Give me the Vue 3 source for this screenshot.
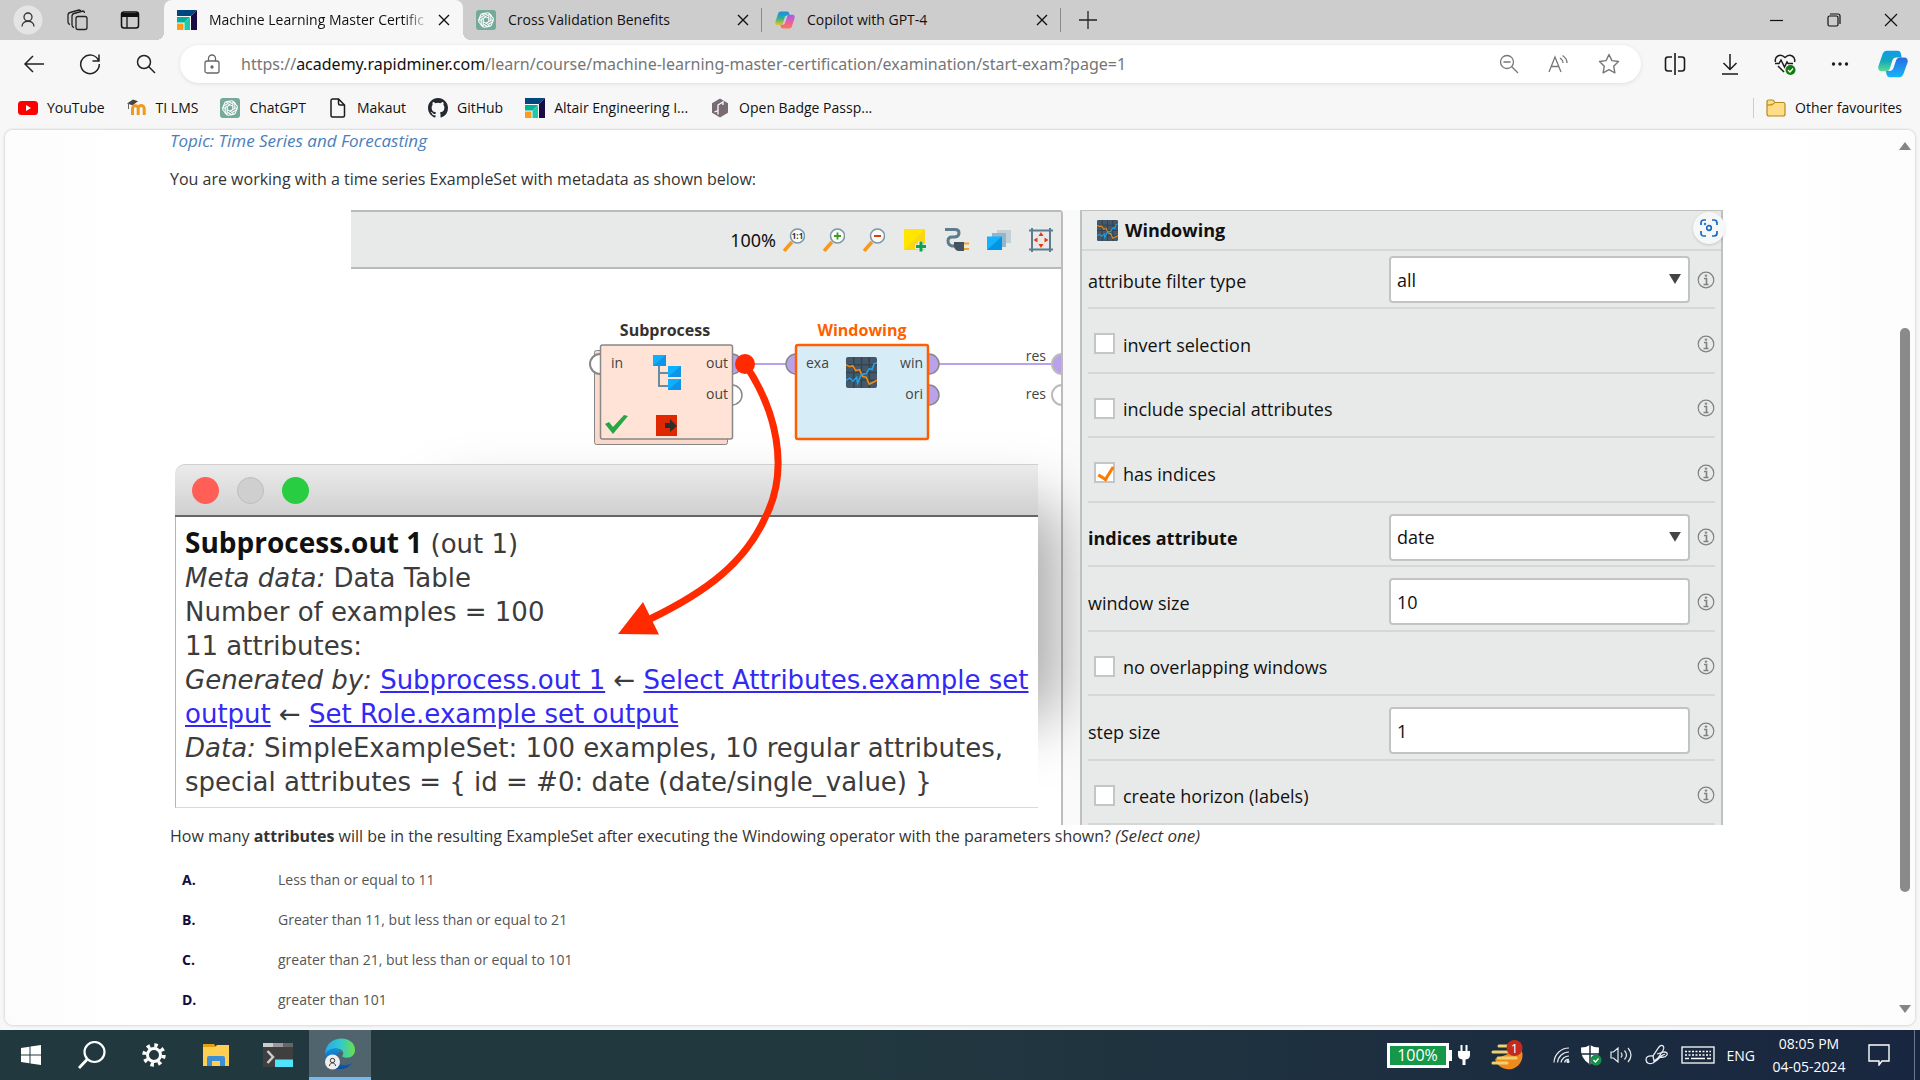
<script setup>
import { ref } from 'vue'

const tabs = [
  { title: 'Machine Learning Master Certific', icon: 'altair', active: true },
  { title: 'Cross Validation Benefits', icon: 'gpt' },
  { title: 'Copilot with GPT-4', icon: 'copilot' },
]
const favourites = [
  { name: 'YouTube', icon: 'youtube' },
  { name: 'TI LMS', icon: 'moodle' },
  { name: 'ChatGPT', icon: 'gpt' },
  { name: 'Makaut', icon: 'file' },
  { name: 'GitHub', icon: 'github' },
  { name: 'Altair Engineering I...', icon: 'altair' },
  { name: 'Open Badge Passp...', icon: 'badge' },
]
const params = ref([
  { id: 'filter', label: 'attribute filter type', type: 'select', value: 'all' },
  { id: 'invert', label: 'invert selection', type: 'check', value: false },
  { id: 'special', label: 'include special attributes', type: 'check', value: false },
  { id: 'has-indices', label: 'has indices', type: 'check', value: true },
  { id: 'indices', label: 'indices attribute', type: 'select', value: 'date', bold: true },
  { id: 'window', label: 'window size', type: 'text', value: '10' },
  { id: 'overlap', label: 'no overlapping windows', type: 'check', value: false },
  { id: 'step', label: 'step size', type: 'text', value: '1' },
  { id: 'horizon', label: 'create horizon (labels)', type: 'check', value: false },
])
const options = [
  ['A.', 'Less than or equal to 11'],
  ['B.', 'Greater than 11, but less than or equal to 21'],
  ['C.', 'greater than 21, but less than or equal to 101'],
  ['D.', 'greater than 101'],
]
</script>

<template>
  <div class="screen">
    <svg class="defs" aria-hidden="true">
      <defs>
        <linearGradient id="cp1" x1="0" y1="0" x2="0" y2="1">
          <stop offset="0" stop-color="#1b8be8" /><stop offset=".5" stop-color="#2fb28f" /><stop offset="1" stop-color="#f5c518" />
        </linearGradient>
        <linearGradient id="cp2" x1="0" y1="0" x2="0" y2="1">
          <stop offset="0" stop-color="#a45bf0" /><stop offset=".6" stop-color="#f0609a" /><stop offset="1" stop-color="#fb7a4b" />
        </linearGradient>
        <linearGradient id="cb1" x1="0" y1="0" x2="0" y2="1">
          <stop offset="0" stop-color="#0f9bea" /><stop offset=".5" stop-color="#14a9bd" /><stop offset="1" stop-color="#5fdc93" />
        </linearGradient>
        <linearGradient id="cb2" x1="0" y1="0" x2="0" y2="1">
          <stop offset="0" stop-color="#2b6be0" /><stop offset="1" stop-color="#16b5fb" />
        </linearGradient>
        <linearGradient id="edge1" x1="0" y1="0" x2="1" y2="0">
          <stop offset="0" stop-color="#2aa7e8" /><stop offset=".5" stop-color="#30c8d0" /><stop offset="1" stop-color="#6be04a" />
        </linearGradient>
        <linearGradient id="edge2" x1="0" y1="0" x2="0" y2="1">
          <stop offset="0" stop-color="#1291e0" /><stop offset="1" stop-color="#0c4aa0" />
        </linearGradient>
        <symbol id="altair" viewBox="0 0 20 20">
          <path d="M0 0h20L14 6H0z" fill="#00467f" /><path d="M20 0v20h-6V6z" fill="#1b0b45" />
          <path d="M0 7h13L7.500 12.500H0z" fill="#00b398" /><path d="M13 7v13H7.500v-7.500z" fill="#1fc9ac" />
          <path d="M0 13.500h6.500V20H0z" fill="#ff9a1a" />
        </symbol>
        <symbol id="gpt" viewBox="0 0 20 20">
          <rect width="20" height="20" rx="3" fill="#75a99a" />
          <g fill="none" stroke="#fff" stroke-width="1.100">
            <path id="petal" d="M10 3.200c2.500-1.200 5 .8 4.800 3.300v4L10 13.200M10 3.200C8.500 3 7 4 6.600 5.500" />
            <use href="#petal" transform="rotate(60 10 10)" /><use href="#petal" transform="rotate(120 10 10)" />
            <use href="#petal" transform="rotate(180 10 10)" /><use href="#petal" transform="rotate(240 10 10)" />
            <use href="#petal" transform="rotate(300 10 10)" />
          </g>
        </symbol>
        <symbol id="copilot" viewBox="0 0 20 20">
          <path d="M6 1.500h6c1.500 0 2 .8 2.400 2.500l.4 1.500h-2.500c-1.500 0-2.300.8-2.800 2.400L8 13c-.5 1.600-1.500 2.200-3 2.200H2.500C.6 15.200 0 13.500.5 11.500L3 4c.6-1.800 1.500-2.500 3-2.500z" fill="url(#cp1)" />
          <path d="M14 18.500H8c-1.500 0-2-.8-2.400-2.500l-.4-1.300h2.500c1.500 0 2.300-.9 2.800-2.600L12 7c.5-1.600 1.500-2.200 3-2.200h2.500c1.900 0 2.500 1.700 2 3.700L17 16c-.6 1.800-1.500 2.500-3 2.500z" fill="url(#cp2)" />
        </symbol>
        <symbol id="copilot-blue" viewBox="0 0 20 20">
          <path d="M6 .5h7c1.500 0 2 .8 2.400 2.500l.4 2.300h-3.500c-1.500 0-2.300.8-2.800 2.400L8 13c-.5 1.600-1.500 2.200-3 2.200H2.500C.6 15.200-.2 13.500.3 11.500L3 3c.6-1.800 1.500-2.500 3-2.500z" fill="url(#cb1)" />
          <path d="M14 19.500H8c-1.500 0-2-.8-2.400-2.500l-.4-2h2.500c1.500 0 2.300-.9 2.800-2.600L12 7.500c.5-1.600 1.500-2.200 3-2.200h2.500c1.900 0 2.700 1.700 2.200 3.700L17 17c-.6 1.800-1.500 2.500-3 2.500z" fill="url(#cb2)" />
        </symbol>
        <symbol id="youtube" viewBox="0 0 20 20">
          <rect y="3" width="20" height="14" rx="3.500" fill="#f00" /><path d="M8 7l5 3-5 3z" fill="#fff" />
        </symbol>
        <symbol id="moodle" viewBox="0 0 20 20">
          <path d="M4 17V10.500a2.800 2.800 0 0 1 5.700 0V17m0-6.500a2.900 2.900 0 0 1 6 0V17" transform="translate(1.500 0)" fill="none" stroke="#f09a1c" stroke-width="3" />
          <path d="M0 5.500L6 1.500l5 1.700-5.500 4z" fill="#444" /><path d="M1.500 5v6" stroke="#666" stroke-width="1" />
        </symbol>
        <symbol id="file" viewBox="0 0 20 20">
          <path d="M4 1h6.500L16.500 7v10.500q0 1.500-1.500 1.500H4.500Q3 19 3 17.500v-15Q3 1 4.500 1zM10.500 1v4.500q0 1.500 1.500 1.500h4.500" fill="none" stroke="#1b1b1b" stroke-width="1.500" />
        </symbol>
        <symbol id="github" viewBox="0 0 16 16">
          <path fill="#24292f" d="M8 0C3.580 0 0 3.580 0 8c0 3.540 2.290 6.530 5.470 7.590.4.070.55-.17.55-.38v-1.490C4 14.100 3.480 13.230 3.320 12.780c-.09-.23-.48-.94-.82-1.130-.28-.15-.68-.52-.01-.53.63-.01 1.080.58 1.230.82.72 1.210 1.870.87 2.330.66.07-.52.28-.87.51-1.070-1.780-.2-3.640-.89-3.640-3.950 0-.87.31-1.590.82-2.150-.08-.2-.36-1.020.08-2.120 0 0 .67-.21 2.200.82a7.400 7.400 0 0 1 4 0c1.530-1.040 2.200-.82 2.200-.82.44 1.100.16 1.920.08 2.120.51.56.82 1.270.82 2.150 0 3.070-1.870 3.750-3.650 3.950.29.25.54.73.54 1.480v2.200c0 .21.15.46.55.38A8 8 0 0 0 16 8c0-4.420-3.580-8-8-8z" />
        </symbol>
        <symbol id="badge" viewBox="0 0 20 20">
          <path d="M10 .5l8 4.700v9.600l-8 4.700-8-4.700V5.200z" fill="#7a6a74" /><path d="M4.500 14l3.500-1.500V7l5-3v3M8 12.500v4" fill="none" stroke="#fff" stroke-width="1.300" />
        </symbol>
        <symbol id="chart" viewBox="0 0 32 32">
          <rect width="32" height="32" rx="2" fill="#44586a" />
          <path d="M0 8h32M0 16h32M0 24h32M8 0v32M16 0v32M24 0v32" stroke="#34444f" stroke-width="1.500" />
          <path d="M0 8l4 2 3-1 3 5 4-1 3 7 4 1 3 7 4-2 4-2" fill="none" stroke="#f28c13" stroke-width="1.600" />
          <path d="M0 24l4-2 3 3 4-4 1 6 4-9 5-1 3-5 3 1 2-6 3-1" fill="none" stroke="#22a4ea" stroke-width="1.600" />
        </symbol>
      </defs>
    </svg>

    <header class="tabstrip">
      <div class="strip-tools">
        <button class="avatar" aria-label="Profile"><svg width="30" height="30" viewBox="0 0 30 30"><circle cx="15" cy="15" r="14.500" fill="#e4e4e4" /><g fill="none" stroke="#333" stroke-width="1.300"><circle cx="15" cy="12" r="4" /><path d="M9 21.500c0-7 12-7 12 0" /></g></svg></button>
        <button aria-label="Workspaces"><svg width="22" height="22" viewBox="0 0 22 22" fill="none" stroke="#222" stroke-width="1.300"><rect x="9" y="7.500" width="11" height="13" rx="2" /><path d="M7 18.500Q5 18 5 16V7q0-2 2-2.500l9-2.500q1.500 0 1.500 2M3 15.500Q1 15 1 13V6q0-2 2-2.500L12 1q1.500 0 1.500 1" /></svg></button>
        <button aria-label="Vertical tabs"><svg width="20" height="20" viewBox="0 0 20 20"><rect x="1.500" y="2" width="17" height="16" rx="2.500" fill="none" stroke="#111" stroke-width="1.500" /><path d="M1.500 3h17v4h-17z" fill="#111" /><path d="M7 7v11" stroke="#111" stroke-width="1.300" /></svg></button>
      </div>
      <nav class="tabs">
        <div v-for="t in tabs" :key="t.title" class="tab" :class="{ active: t.active }">
          <svg class="fav-icon"><use :href="'#' + t.icon" /></svg>
          <span class="tab-title">{{ t.title }}</span>
          <button class="tab-close" aria-label="Close tab"><svg width="12" height="12" viewBox="0 0 12 12"><path d="M1 1l10 10M11 1L1 11" stroke="#111" stroke-width="1.400" /></svg></button>
        </div>
        <button class="new-tab" aria-label="New tab"><svg width="18" height="18" viewBox="0 0 18 18"><path d="M9 0v18M0 9h18" stroke="#222" stroke-width="1.300" /></svg></button>
      </nav>
      <div class="window-controls">
        <button aria-label="Minimise"><svg width="14" height="14" viewBox="0 0 14 14"><path d="M0 7.500h13" stroke="#111" stroke-width="1.200" /></svg></button>
        <button aria-label="Restore"><svg width="14" height="14" viewBox="0 0 14 14" fill="none" stroke="#111" stroke-width="1.200"><rect x="1" y="3" width="10" height="10" rx="1.500" /><path d="M3 1h8q2 0 2 2v8" /></svg></button>
        <button aria-label="Close"><svg width="14" height="14" viewBox="0 0 14 14"><path d="M1 1l12 12M13 1L1 13" stroke="#111" stroke-width="1.200" /></svg></button>
      </div>
    </header>

    <div class="toolbar">
      <div class="nav-buttons">
        <button aria-label="Back"><svg width="22" height="22" viewBox="0 0 22 22" fill="none" stroke="#222" stroke-width="1.500"><path d="M21 11H2M10 3l-8 8 8 8" /></svg></button>
        <button aria-label="Refresh"><svg width="22" height="22" viewBox="0 0 22 22" fill="none" stroke="#222" stroke-width="1.500"><path d="M19.500 7.500A9.300 9.300 0 1 0 20.300 11M20 1.500V8h-6.500" /></svg></button>
        <button aria-label="Search"><svg width="20" height="20" viewBox="0 0 20 20" fill="none" stroke="#222" stroke-width="1.500"><circle cx="8" cy="8" r="6.500" /><path d="M12.800 12.800L19 19" /></svg></button>
      </div>
      <div class="address">
        <svg class="lock" width="16" height="20" viewBox="0 0 16 20" fill="none" stroke="#666" stroke-width="1.300"><rect x="1" y="7" width="14" height="12" rx="2" /><path d="M4.500 7V4.500a3.500 3.500 0 0 1 7 0V7" /><circle cx="8" cy="13" r="1" fill="#666" /></svg>
        <a class="url" href="#">https://<b>academy.rapidminer.com</b>/learn/course/machine-learning-master-certification/examination/start-exam?page=1</a>
        <button aria-label="Zoom out"><svg width="20" height="20" viewBox="0 0 20 20" fill="none" stroke="#777" stroke-width="1.300"><circle cx="8" cy="8" r="6.500" /><path d="M12.800 12.800L19 19M4.500 8h7" /></svg></button>
        <button aria-label="Read aloud"><svg width="22" height="20" viewBox="0 0 22 20" fill="none" stroke="#777" stroke-width="1.300"><path d="M1 18L7 3l6 15M3.200 12.500h7.500M12 4q3 2 3 5M14.500 1.500q4.500 2.800 4.500 7.500" /></svg></button>
        <button aria-label="Add to favourites"><svg width="22" height="22" viewBox="0 0 22 22" fill="none" stroke="#777" stroke-width="1.400" stroke-linejoin="round"><path d="M11 1.500l2.900 6.100 6.600.9-4.800 4.700 1.200 6.600L11 16.600l-5.900 3.200 1.200-6.600L1.500 8.500l6.600-.9z" /></svg></button>
      </div>
      <div class="actions">
        <button aria-label="Split screen"><svg width="22" height="22" viewBox="0 0 22 22" fill="none" stroke="#1b1b1b" stroke-width="1.600"><path d="M8 4H4Q1.500 4 1.500 6.500v9Q1.500 18 4 18h4M14 4h4q2.500 0 2.500 2.500v9q0 2.500-2.500 2.500h-4M11 0v22" /></svg></button>
        <button aria-label="Downloads"><svg width="18" height="22" viewBox="0 0 18 22" fill="none" stroke="#1b1b1b" stroke-width="1.500"><path d="M9 1v15M2.500 10L9 16.500l6.500-6.500M1 21h16" /></svg></button>
        <button aria-label="Browser essentials"><svg width="22" height="22" viewBox="0 0 22 22" fill="none" stroke="#1b1b1b" stroke-width="1.500"><path d="M1.500 9C0 4 6-.5 11 4.500 16-.5 22 4 20.500 9M4 13l6 6M1 10.500h4l2-3.500 3.500 7 2.500-5 1 1.500h5" /><circle cx="16.500" cy="17" r="5" fill="#107c10" stroke="none" /><path d="M14 17l2 2 3-3.500" stroke="#fff" stroke-width="1.200" /></svg></button>
        <button aria-label="Settings and more"><svg width="18" height="6" viewBox="0 0 18 6" fill="#1b1b1b"><circle cx="2.500" cy="3" r="1.700" /><circle cx="9" cy="3" r="1.700" /><circle cx="15.500" cy="3" r="1.700" /></svg></button>
        <button aria-label="Copilot"><svg width="30" height="28" viewBox="0 0 20 20" preserveAspectRatio="none"><use href="#copilot-blue" /></svg></button>
      </div>
    </div>

    <nav class="favourites">
      <a v-for="f in favourites" :key="f.name" href="#" class="fav"><svg class="fav-icon"><use :href="'#' + f.icon" /></svg>{{ f.name }}</a>
      <a href="#" class="fav other"><svg class="fav-icon" viewBox="0 0 20 20"><path d="M1 4q0-2 2-2h4l2 2.500h8q2 0 2 2V16q0 2-2 2H3q-2 0-2-2z" fill="#ffdd86" stroke="#b58a1b" stroke-width="1.200" /><path d="M1 7h5l3-2.500" fill="#e5b62c" stroke="#b58a1b" /></svg>Other favourites</a>
    </nav>

    <main class="page">
      <article class="exam">
        <p class="topic">Topic: Time Series and Forecasting</p>
        <p class="intro">You are working with a time series ExampleSet with metadata as shown below:</p>

        <div class="figure">
          <section class="process">
            <div class="process-bar">
              <span class="zoom-level">100%</span>
              <svg width="22" height="24" viewBox="0 0 22 24"><path d="M1 23l8-9" stroke="#f7981d" stroke-width="3.500" /><circle cx="14.500" cy="8" r="7" fill="#f8fafa" stroke="#7d95a3" stroke-width="1.500" /><text x="14.500" y="11" font-size="8" font-weight="700" text-anchor="middle" fill="#333">1:1</text></svg>
              <svg width="22" height="24" viewBox="0 0 22 24"><path d="M1 23l8-9" stroke="#f7981d" stroke-width="3.500" /><circle cx="14.500" cy="8" r="7" fill="#f8fafa" stroke="#7d95a3" stroke-width="1.500" /><path d="M11 8h7M14.500 4.500v7" stroke="#3f9b1e" stroke-width="1.800" /></svg>
              <svg width="22" height="24" viewBox="0 0 22 24"><path d="M1 23l8-9" stroke="#f7981d" stroke-width="3.500" /><circle cx="14.500" cy="8" r="7" fill="#f8fafa" stroke="#7d95a3" stroke-width="1.500" /><path d="M11 8h7" stroke="#e8380d" stroke-width="1.800" /></svg>
              <svg width="24" height="24" viewBox="0 0 24 24"><path d="M1 1h21v21H1z" fill="#ffe500" /><path d="M22 1v21H1z" fill="#fbd713" /><path d="M12 18.500h12M17.500 13v11" stroke="#e8ebea" stroke-width="5" /><path d="M13 18.500h10M18 13.500v10" stroke="#0ea34b" stroke-width="3" /></svg>
              <svg width="24" height="24" viewBox="0 0 24 24"><path d="M0 1.500h10q4 0 4 3.500T10 9H7q-4 0-4 4t4 5h4" fill="none" stroke="#5d7d8f" stroke-width="3" /><path d="M9 14h10v9h-6q-5-1-4-9z" fill="#44545e" /><path d="M19 15.500h5M19 21h5" stroke="#f5a623" stroke-width="2" /></svg>
              <svg width="24" height="24" viewBox="0 0 24 24"><path d="M10 2h14v13H10z" fill="#c3d0d6" /><path d="M5 5h14v14H5z" fill="#93b6c8" /><path d="M0 8.500h15V22H0z" fill="#12b2ff" /><path d="M15 8.500V22H0z" fill="#0295e6" /></svg>
              <svg width="24" height="24" viewBox="0 0 24 24"><path d="M3 0v24M21 0v24M0 2.500h24M0 21.500h24" stroke="#5d7d8f" stroke-width="2" /><path d="M12 4l2.500 4h-5zM12 20l2.500-4h-5zM4.500 12l4-2.500v5zM19.500 12l-4-2.500v5z" fill="#e8380d" /></svg>
            </div>
          </section>

          <svg class="flow" width="888" height="616" viewBox="0 0 888 616">
            <g class="node-title" text-anchor="middle"><text x="490" y="126" fill="#333">Subprocess</text><text x="687" y="126" fill="#ff5f00">Windowing</text></g>
            <path d="M558 154H612M763 154H877" stroke="#b9a1ec" stroke-width="2" />
            <rect x="419.500" y="140.500" width="133" height="94" rx="2" fill="#fbd9cb" stroke="#888" />
            <circle cx="425" cy="154" r="10" fill="#fff" stroke="#888" stroke-width="2" />
            <g stroke="#888" stroke-width="1.500"><circle cx="557" cy="154" r="10" fill="#b9a1ec" /><circle cx="557" cy="185" r="10" fill="#fff" /></g>
            <rect x="425.500" y="135" width="132" height="94" rx="2" fill="#ffe3d6" stroke="#888" stroke-width="1.500" />
            <g fill="#b9a1ec" stroke="#888" stroke-width="1.500"><circle cx="621" cy="154" r="10" /><circle cx="754" cy="154" r="10" /><circle cx="754" cy="185" r="10" /></g>
            <rect x="621" y="135" width="132" height="94" rx="2" fill="#d6edf8" stroke="#ff5f00" stroke-width="2.500" />
            <path d="M887 144a10 10 0 0 0 0 20z" fill="#b9a1ec" stroke="#bbb" stroke-width="2" /><path d="M887 175a10 10 0 0 0 0 20z" fill="#fff" stroke="#bbb" stroke-width="2" />
            <g class="port"><text x="436" y="158">in</text><text x="553" y="158" text-anchor="end">out</text><text x="553" y="189" text-anchor="end">out</text><text x="631" y="158">exa</text><text x="748" y="158" text-anchor="end">win</text><text x="748" y="189" text-anchor="end">ori</text><text x="871" y="151" text-anchor="end">res</text><text x="871" y="189" text-anchor="end">res</text></g>
            <path d="M484 155v21h10M484 163h10" fill="none" stroke="#6c8b9c" stroke-width="2" />
            <g fill="#0db0ff"><path d="M478 145h13v11h-13zM493 156h13v11h-13zM493 169h13v11h-13z" /></g>
            <g fill="#0c94e6"><path d="M491 145v11h-13zM506 156v11h-13zM506 169v11h-13z" /></g>
            <path d="M430 214l4-2 4 5 11-12 4 1-15 18z" fill="#26a745" />
            <rect x="481" y="205" width="21" height="21" fill="#df2800" /><path d="M490 213h5v-4l7 7-7 6v-4h-5z" fill="#2d2d2d" />
            <use href="#chart" x="671" y="147" width="31" height="31" />
          </svg>

          <section class="mac">
            <div class="mac-bar"><i class="light red"></i><i class="light grey"></i><i class="light green"></i></div>
            <div class="mac-body">
              <p><b>Subprocess.out 1</b> (out 1)</p>
              <p><em>Meta data:</em> Data Table</p>
              <p>Number of examples = 100</p>
              <p>11 attributes:</p>
              <p><em>Generated by:</em> <a href="#">Subprocess.out 1</a> ← <a href="#">Select Attributes.example set</a></p>
              <p><a href="#">output</a> ← <a href="#">Set Role.example set output</a></p>
              <p><em>Data:</em> SimpleExampleSet: 100 examples, 10 regular attributes,</p>
              <p>special attributes = { id = #0: date (date/single_value) }</p>
            </div>
          </section>

          <svg class="arrow" width="888" height="616" viewBox="0 0 888 616"><circle cx="570" cy="154" r="10" fill="#ff2a00" /><path d="M570 154C600 198 616 258 590 308 570 352 533 381 475 409" fill="none" stroke="#ff2a00" stroke-width="7" /><path d="M443 424l25-32 16 32.500z" fill="#ff2a00" /></svg>

          <form class="params" @submit.prevent>
            <h2><svg width="21" height="21"><use href="#chart" /></svg>Windowing</h2>
            <div v-for="p in params" :key="p.id" class="row">
              <input v-if="p.type === 'check'" :id="p.id" v-model="p.value" type="checkbox">
              <label :for="p.id" :class="{ strong: p.bold }">{{ p.label }}</label>
              <span v-if="p.type === 'select'" class="select"><select :id="p.id" v-model="p.value"><option>{{ p.value }}</option></select></span>
              <input v-if="p.type === 'text'" :id="p.id" v-model="p.value" class="field" type="text">
              <svg class="info" width="18" height="18" viewBox="0 0 18 18" fill="none" stroke="#808282"><circle cx="9" cy="9" r="7.800" stroke-width="1.200" /><path d="M7 7.500h2.500V13M6.500 13.500h5" stroke-width="1.600" /><circle cx="9" cy="4.600" r=".8" fill="#808282" /></svg>
            </div>
            <button type="button" class="lens" aria-label="Visual search"><svg width="18" height="18" viewBox="0 0 18 18" fill="none" stroke="#1469c7" stroke-width="1.700"><path d="M1 6V4q0-3 3-3h2M12 1h2q3 0 3 3v2M17 12v2q0 3-3 3h-2M6 17H4q-3 0-3-3v-2" /><circle cx="9" cy="9" r="2.300" /><circle cx="5" cy="5" r=".4" /></svg></button>
          </form>
        </div>

        <p class="question">How many <b>attributes</b> will be in the resulting ExampleSet after executing the Windowing operator with the parameters shown? <em>(Select one)</em></p>
        <ul class="options">
          <li v-for="o in options" :key="o[0]"><b>{{ o[0] }}</b><span>{{ o[1] }}</span></li>
        </ul>
      </article>
      <div class="scrollbar"><svg width="12" height="8" viewBox="0 0 12 8"><path d="M6 0l6 8H0z" fill="#858585" /></svg><i class="thumb"></i><svg width="12" height="8" viewBox="0 0 12 8"><path d="M6 8l6-8H0z" fill="#858585" /></svg></div>
    </main>

    <footer class="taskbar">
      <div class="apps">
        <button aria-label="Start"><svg width="20" height="20" viewBox="0 0 20 20" fill="#fff"><path d="M0 3l8.500-1.200v7.700H0zM9.500 1.600L20 0v9.500H9.500zM0 10.500h8.500v7.700L0 17zM9.500 10.500H20V20L9.500 18.500z" /></svg></button>
        <button aria-label="Search"><svg width="28" height="28" viewBox="0 0 28 28" fill="none" stroke="#fff" stroke-width="2.200"><circle cx="16.500" cy="11" r="10" /><path d="M9.500 18L1 27" stroke-width="2.800" /></svg></button>
        <button aria-label="Settings"><svg width="24" height="24" viewBox="0 0 24 24" fill="none" stroke="#fff"><circle cx="12" cy="12" r="6.500" stroke-width="3" /><circle cx="12" cy="12" r="9.700" stroke-width="4" stroke-dasharray="3.400 4.218" /></svg></button>
        <button aria-label="File Explorer"><svg width="28" height="24" viewBox="0 0 28 24"><path d="M1 1h11l2 3H1z" fill="#e59f0a" /><path d="M1 4h12l2-2h12v21H1z" fill="#ffcf52" /><path d="M5 23v-8q0-2 2-2h14q2 0 2 2v8h-5v-5h-8v5z" fill="#3b8fd6" /></svg></button>
        <button aria-label="Terminal"><svg width="30" height="24" viewBox="0 0 30 24"><path d="M0 0h30v24H0z" fill="#3f3f3f" /><path d="M0 0h10v4H0z" fill="#ccc" /><path d="M10 0h10v4H10z" fill="#999" /><path d="M20 0h10v4H20z" fill="#666" /><path d="M4.500 8l5.500 6-5.500 6" fill="none" stroke="#ccc" stroke-width="2.500" /><path d="M12 16.500h18V24H12z" fill="#50e3fb" /></svg></button>
        <button class="running" aria-label="Microsoft Edge"><svg width="32" height="32" viewBox="0 0 32 32"><path d="M1 17C1-4 31-4 31 12c0 7-7 9-12 7-2-1 1-2 0-5-2-5-13-5-18 3z" fill="url(#edge1)" /><path d="M1 16c4-7 15-7 17-2-5-1-8 5-5 10 3 4 10 4 15 1-3 5-8 6-12 6C7 31 0 24 1 16z" fill="url(#edge2)" /><circle cx="8.500" cy="24" r="7.500" fill="#eee" /><g fill="none" stroke="#333"><circle cx="8.500" cy="22.500" r="2.200" /><path d="M5.500 28c0-4 6-4 6 0" /></g></svg></button>
      </div>
      <div class="tray">
        <span class="battery">100%</span>
        <svg class="plug" width="12" height="20" viewBox="0 0 12 20" fill="#fff"><path d="M2.500 0h2v6h3V0h2v6H12v4q0 4-4.500 4.500V20h-3v-5.500Q0 14 0 10V6h2.500z" /></svg>
        <svg class="weather" width="32" height="30" viewBox="0 0 32 30"><path d="M30 9a14 14 0 1 1-26 10z" fill="#f08a1c" /><path d="M8 7h10M2 13h20M7 19h18M2 24h14" transform="translate(0 -1)" stroke="#ecd071" stroke-width="3" stroke-linecap="round" /><circle cx="23.500" cy="8" r="8" fill="#c42b1c" /><text x="23.500" y="13" font-size="13" text-anchor="middle" fill="#fff">1</text></svg>
        <svg class="wifi" width="17" height="16" viewBox="0 0 17 16" fill="none" stroke="#e8ebef" stroke-width="1.200"><path d="M1 15.500A15 15 0 0 1 16 1M4.500 15.500A11.500 11.500 0 0 1 16 5M8 15.500A8 8 0 0 1 16 9" /><path d="M11.500 15.500a4 4 0 0 1 4.500-3" /><circle cx="15" cy="14.500" r="1" fill="#fff" /></svg>
        <svg class="shield" width="22" height="22" viewBox="0 0 22 22"><path d="M10 1q4 2.500 9 2.500 1 11-9 17-10-6-9-17Q6 3.500 10 1z" fill="#fff" /><path d="M10 1v19M1 10h18" stroke="#1b2c40" stroke-width="1.500" /><circle cx="16" cy="16" r="5.500" fill="#16914a" /><path d="M13.500 16l2 2 3-3.500" fill="none" stroke="#fff" stroke-width="1.300" /></svg>
        <svg width="23" height="18" viewBox="0 0 23 18" fill="none" stroke="#e8ebef" stroke-width="1.200"><path d="M1 6v6h2.500L8 16V2L3.500 6zM11 6.500q2 2.500 0 5M14.500 4.500q4 4.500 0 9M18 2q6 7 0 14" /></svg>
        <svg class="pen" width="24" height="22" viewBox="0 0 24 22" fill="none" stroke="#e8ebef" stroke-width="1.300"><path d="M9 17L8 12 14 3q2.500-3 4.500-.5 1 1.500-.5 4L13 14zM8 12Q1 11 1 16q1 5 7 3 5-3 8-7 3-2 4-1.500M12 10l7-2q4 0 3 3-2 3-7 2" /></svg>
        <svg width="34" height="18" viewBox="0 0 34 18" fill="none" stroke="#fff" stroke-width="1.300"><rect x="1" y="1" width="32" height="16" /><path d="M4 5.500h26M4 9h26" stroke-dasharray="2 1.500" stroke-width="1.500" /><path d="M4 12.500h4M10 12.500h14M26 12.500h4" /></svg>
        <span class="lang">ENG</span>
        <div class="clock"><span>08:05 PM</span><span>04-05-2024</span></div>
        <svg class="notice" width="22" height="22" viewBox="0 0 22 22" fill="none" stroke="#fff" stroke-width="1.400"><path d="M1 1h20v16h-7l-3 4v-4H1z" /></svg>
      </div>
    </footer>
  </div>
</template>

<style>
body { margin: 0; }
</style>

<style scoped>
* { box-sizing: border-box; }
p, h2, ul { margin: 0; padding: 0; }
button { border: 0; background: none; padding: 0; font: inherit; display: flex; align-items: center; justify-content: center; }
svg { display: block; flex: none; }
a { color: inherit; text-decoration: none; }
.defs { position: absolute; width: 0; height: 0; }
.screen { height: 100vh; display: flex; flex-direction: column; background: #f7f7f7; font-family: "Open Sans", "Noto Sans", sans-serif; font-size: 14px; color: #111; overflow: hidden; }

.tabstrip { flex: none; display: flex; height: 40px; background: #cdcdcd; }
.strip-tools { display: flex; align-items: center; gap: 24px; width: 164px; padding-left: 13px; flex: none; }
.strip-tools button:last-child { margin-left: 7px; }
.tabs { display: flex; flex: 1; min-width: 0; }
.tab { position: relative; display: flex; align-items: center; width: 299px; padding: 0 13px; }
.tab:not(.active)::after { content: ""; position: absolute; right: 0; top: 8px; width: 1px; height: 24px; background: #8a8a8a; }
.tab.active { background: #f7f7f7; border-radius: 8px 8px 0 0; }
.tab.active::before, .tab.active::after { content: ""; position: absolute; bottom: 0; width: 8px; height: 8px; }
.tab.active::before { left: -8px; background: radial-gradient(circle at 0 0, #cdcdcd 8px, #f7f7f7 8px); }
.tab.active::after { right: -8px; background: radial-gradient(circle at 100% 0, #cdcdcd 8px, #f7f7f7 8px); }
.fav-icon { width: 20px; height: 20px; }
.tab-title { flex: 1; min-width: 0; margin: 0 8px 0 12px; padding-bottom: 2px; white-space: nowrap; overflow: hidden; }
.active .tab-title { mask-image: linear-gradient(90deg, #000 88%, transparent); }
.new-tab { width: 54px; }
.window-controls { display: flex; padding-right: 1px; }
.window-controls button { width: 57px; }

.toolbar { flex: none; display: flex; align-items: center; height: 48px; padding-right: 12px; }
.nav-buttons { display: flex; width: 180px; padding-left: 6px; }
.nav-buttons button { width: 56px; }
.address { flex: 1; min-width: 0; display: flex; align-items: center; height: 38px; border-radius: 19px; background: #fff; box-shadow: 0 1px 4px rgba(0, 0, 0, .1); padding: 0 21px 0 24px; }
.url { flex: 1; min-width: 0; margin-left: 21px; font-family: "Noto Sans", sans-serif; font-size: 16px; color: #767676; white-space: nowrap; overflow: hidden; }
.url b { font-weight: 400; color: #111; }
.address button { width: 22px; margin-left: 28px; }
.actions { display: flex; align-items: center; padding-left: 6px; }
.actions button { width: 55px; }
.actions button:last-child { width: 30px; margin-left: 11px; }

.favourites { flex: none; display: flex; align-items: center; gap: 22px; height: 42px; padding: 0 18px 3px; }
.fav { display: flex; align-items: center; gap: 9px; white-space: nowrap; }
.other { margin-left: auto; border-left: 1px solid #ccc; padding-left: 12px; height: 20px; }

.page { flex: 1; min-height: 0; display: flex; margin: 0 5px 5px; border-radius: 8px; background: linear-gradient(90deg, #fcfcfc, #fff 118px, #fff calc(100% - 140px), #fcfcfc); box-shadow: 0 0 3px rgba(0, 0, 0, .25); overflow: hidden; }
.exam { flex: 1; min-width: 0; padding: 0 192px 0 165px; font-size: 16px; line-height: 22px; color: #333; }
.topic { line-height: 21px; font-size: 17px; font-style: italic; color: #4a7ebb; }
.question em { font-size: 17px; line-height: 20px; }
.intro { margin-top: 17px; }
.figure { position: relative; display: flex; height: 615px; margin: 20px 0 0 5px; background: #fafafa; }
.process { width: 888px; background: #fff; border-right: 2px solid #bdbdbd; border-radius: 0 4px 0 0; flex: none; padding-left: 176px; }
.process-bar { display: flex; align-items: center; justify-content: flex-end; gap: 18px; height: 59px; padding-right: 8px; background: #e8eae9; border: solid #b9bbba; border-width: 2px 0; }
.zoom-level { font-family: "Noto Sans", sans-serif; font-size: 18px; color: #111; margin-right: -11px; }
.flow, .arrow { position: absolute; left: 0; top: 0; }
.node-title { font: 700 16px "Open Sans", sans-serif; }
.port { font: 14px "Open Sans", sans-serif; fill: #444; }

.mac { position: absolute; left: 0; top: 254px; width: 863px; height: 344px; }
.mac::before { content: ""; position: absolute; inset: 60px 0 110px 290px; box-shadow: 0 0 60px 20px rgba(0, 0, 0, .35); clip-path: inset(-110px -100px -90px -100px); }
.mac-bar { position: relative; display: flex; align-items: center; gap: 18px; height: 53px; padding-left: 17px; background: linear-gradient(#ebebeb, #d0d0d0); border-top: 1px solid #cfcfcf; border-bottom: 2px solid #666; border-radius: 10px 0 0 0; }
.light { width: 27px; height: 27px; border-radius: 50%; }
.red { background: #ff5f57; }
.grey { background: #cfcfcf; border: 1px solid #bdbdbd; }
.green { background: #28cd41; }
.mac-body { position: relative; height: 291px; padding: 10px 0 0 9px; background: #fff; border: 1px solid #d9d9d9; border-left-color: #b5b5b5; border-top: 0; border-right: 0; font: 26px/34px "DejaVu Sans", sans-serif; color: #3c3c3c; white-space: nowrap; }
.mac-body p { height: 34px; }
.mac-body b { font-family: "Open Sans", sans-serif; font-size: 28px; line-height: 30px; color: #111; }
.mac-body a { color: #3329f5; text-decoration: underline; }

.params { position: relative; flex: 1; min-width: 0; display: flex; flex-direction: column; margin-left: 17px; background: #e8eae9; border: solid #bfc1c0; border-width: 1px 2px 0; color: #111; font-size: 18px; }
.params h2 { display: flex; align-items: center; gap: 7px; height: 40px; padding-left: 15px; border-bottom: 2px solid #d6d8d7; font-size: 18px; }
.row { flex: 1; display: flex; align-items: center; margin: 0 6px; padding-top: 7px; border-bottom: 2px solid #d6d8d7; }
.row:nth-of-type(1) { flex: none; height: 58px; padding-top: 1px; }
.row label { flex: 1; padding-top: 2px; }
.strong { font-weight: 700; }
.row input[type="checkbox"] { appearance: none; position: relative; width: 21px; height: 21px; margin: 0 8px 0 6px; background: #fff; border: 2px solid #c4c6c5; }
.row input[type="checkbox"]:checked::after { content: ""; position: absolute; left: 5px; top: 0; width: 7px; height: 13px; border: solid #ff7a00; border-width: 0 3px 3px 0; transform: rotate(32deg); }
.select { position: relative; display: flex; }
.select::after { content: ""; position: absolute; right: 9px; top: 18px; width: 12px; height: 10px; background: #444; clip-path: polygon(0 0, 100% 0, 50% 100%); pointer-events: none; }
.field, select { appearance: none; width: 301px; height: 47px; padding: 0 6px; border: 2px solid #c2c4c3; border-radius: 4px; background: #fff; font: inherit; color: #111; }
.info { margin: 0 0 0 7px; }
.lens { position: absolute; right: -4px; top: 1px; width: 32px; height: 32px; border-radius: 50%; background: #f6f7f7; box-shadow: 0 1px 3px rgba(0, 0, 0, .15); }

.question { height: 22px; white-space: nowrap; }
.options { list-style: none; margin-top: 13px; font-size: 14px; line-height: 40px; color: #555; }
.options li { display: flex; }
.options b { width: 108px; padding-left: 12px; color: #140a40; }
.scrollbar { display: flex; flex-direction: column; align-items: center; width: 20px; padding: 12px 0; margin-left: -20px; }
.thumb { width: 10px; height: 564px; margin: 178px 0 auto; border-radius: 5px; background: #8a8a8a; }

.taskbar { flex: none; display: flex; justify-content: space-between; height: 50px; background: linear-gradient(90deg, #22383f, #22383f 45%, #1b2c40 80%, #19263f); color: #fff; }
.apps { display: flex; }
.apps button { width: 62px; }
.apps button:first-child { width: 61px; }
.apps .running { background: #4f646c; border-bottom: 3px solid #76b9ed; }
.tray { display: flex; align-items: center; gap: 12px; padding-right: 24px; margin-right: 5px; border-right: 1px solid #6d788a; }
.battery { position: relative; width: 62px; height: 25px; margin-right: -3px; border: 3px solid #fff; background: #16984a; font-size: 16px; line-height: 19px; text-align: center; }
.battery::after { content: ""; position: absolute; right: -6px; top: 4px; width: 3px; height: 11px; background: #fff; }
.plug { margin-right: 9px; }
.weather { margin-right: 18px; }
.wifi { margin-right: -2px; }
.shield { margin-right: -4px; }
.clock { display: flex; flex-direction: column; width: 84px; text-align: center; line-height: 23px; }
.notice { margin-left: 5px; }
</style>
